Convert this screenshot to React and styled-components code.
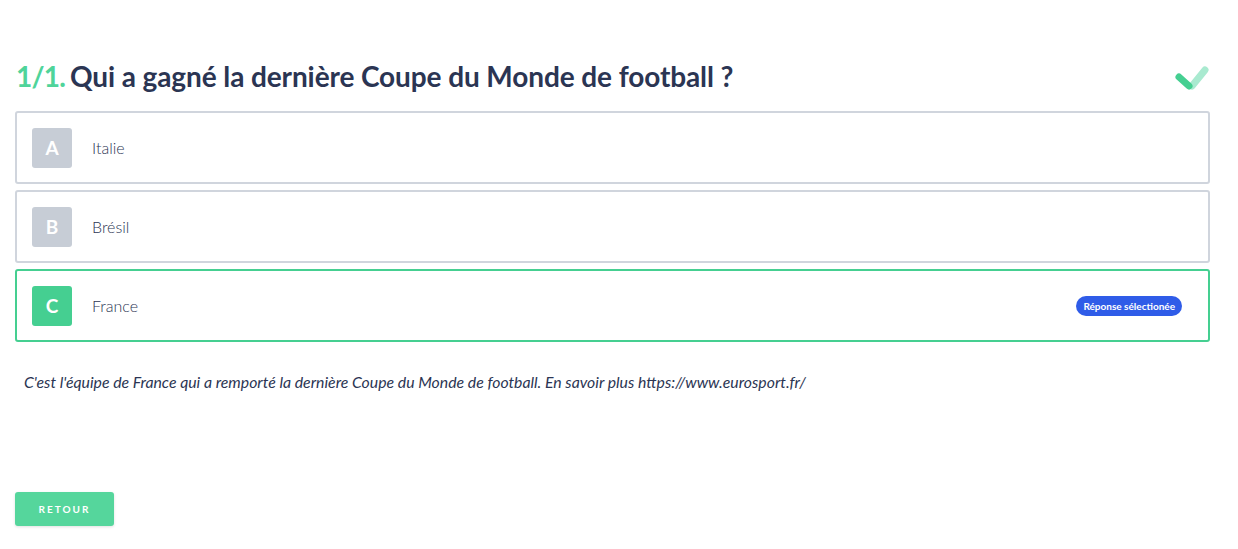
import React from "react";
import styled, { createGlobalStyle } from "styled-components";

const GlobalStyle = createGlobalStyle`
  body {
    margin: 0;
    background: #fff;
    font-family: Lato, "Open Sans", sans-serif;
    color: #2b3553;
  }
`;

const Page = styled.div`
  padding: 56px 28px 0 15px;
  height: 549px;
  box-sizing: border-box;
  display: flex;
  flex-direction: column;
`;

const Header = styled.div`
  display: flex;
  align-items: center;
  justify-content: space-between;
  height: 40px;
  margin-bottom: 15px;
`;

const Title = styled.h1`
  margin: 0 0 0 1px;
  font-size: 28px;
  font-weight: 700;
  color: #2b3553;
  letter-spacing: -0.1px;
`;

const Number = styled.span`
  color: #4fd49a;
  margin-right: 5px;
  letter-spacing: -0.8px;
`;

const Answers = styled.div`
  display: flex;
  flex-direction: column;
  gap: 6px;
`;

const Card = styled.div`
  display: flex;
  align-items: center;
  height: 73px;
  box-sizing: border-box;
  border: 2px solid ${(p) => (p.$selected ? "#45cf91" : "#d0d5dd")};
  border-radius: 3px;
  padding: 0 26px 0 15px;
`;

const Letter = styled.div`
  width: 40px;
  height: 40px;
  border-radius: 3px;
  background: ${(p) => (p.$selected ? "#45cf91" : "#c7cdd6")};
  color: #fff;
  font-size: 19px;
  font-weight: 700;
  display: flex;
  align-items: center;
  justify-content: center;
`;

const Label = styled.div`
  margin-left: 20px;
  font-size: 16px;
  font-weight: 300;
  color: #2b3553;
  flex: 1;
`;

const Badge = styled.span`
  background: #2f5ce8;
  color: #fff;
  font-size: 10px;
  font-weight: 700;
  border-radius: 11px;
  padding: 5px 7px;
  line-height: 1;
`;

const Explanation = styled.p`
  margin: 30px 0 0 9px;
  font-size: 15.8px;
  font-style: italic;
  color: #2b3553;
`;

const Spacer = styled.div`
  flex: 1;
`;

const BackButton = styled.button`
  align-self: flex-start;
  width: 99px;
  height: 34px;
  margin-bottom: 23px;
  border: none;
  border-radius: 3px;
  background: #55d69c;
  color: #fff;
  font-family: Lato, sans-serif;
  font-size: 10px;
  font-weight: 700;
  letter-spacing: 2px;
  box-shadow: 0 1px 3px rgba(0, 0, 0, 0.12);
`;

const Check = () => (
  <svg width="40" height="34" viewBox="0 0 40 34">
    <line x1="22" y1="27" x2="35" y2="11" stroke="#a9ead0" strokeWidth="7" strokeLinecap="round" />
    <line x1="9" y1="18" x2="19" y2="27" stroke="#45cf91" strokeWidth="7" strokeLinecap="round" />
  </svg>
);

const answers = [
  { letter: "A", text: "Italie" },
  { letter: "B", text: "Brésil" },
  { letter: "C", text: "France", selected: true },
];

const App = () => (
  <>
    <GlobalStyle />
    <Page>
      <Header>
        <Title>
          <Number>1/1.</Number>Qui a gagné la dernière Coupe du Monde de football ?
        </Title>
        <Check />
      </Header>
      <Answers>
        {answers.map((a) => (
          <Card key={a.letter} $selected={a.selected}>
            <Letter $selected={a.selected}>{a.letter}</Letter>
            <Label>{a.text}</Label>
            {a.selected && <Badge>Réponse sélectionée</Badge>}
          </Card>
        ))}
      </Answers>
      <Explanation>
        C'est l'équipe de France qui a remporté la dernière Coupe du Monde de football. En savoir plus https://www.eurosport.fr/
      </Explanation>
      <Spacer />
      <BackButton>RETOUR</BackButton>
    </Page>
  </>
);

export default App;
